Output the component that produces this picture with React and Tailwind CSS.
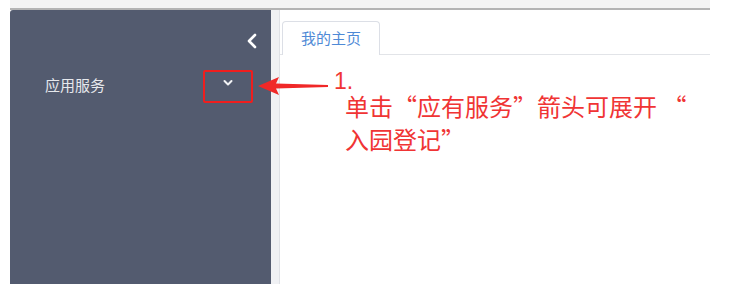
import React from 'react';

const cjk = '"Noto Sans CJK SC", "Noto Sans", sans-serif';

const Sidebar = () => (
  <aside className="w-[261px] h-full bg-[#535b6f] rounded-tl-[3px] pt-[23px]">
    <div className="flex justify-end pr-[13px]">
      <svg width="12" height="16" viewBox="0 0 12 16">
        <path d="M9 2 L3 8 L9 14" fill="none" stroke="#ffffff" strokeWidth="2.6" strokeLinecap="round" strokeLinejoin="round" />
      </svg>
    </div>
    <div className="flex items-center justify-between pl-[35px] pr-[18px] mt-[21px]">
      <span className="text-[15px] leading-[20px] text-[#e6e8ec] mb-[3px]">应用服务</span>
      <div className="w-[50px] h-[33px] border-2 border-[#f01e1e] rounded-[2px] flex justify-center pt-[7px]">
        <svg width="12" height="8" viewBox="0 0 12 8">
          <path d="M2.5 2 L6 5.5 L9.5 2" fill="none" stroke="#f2f3f5" strokeWidth="2" strokeLinecap="round" strokeLinejoin="round" />
        </svg>
      </div>
    </div>
  </aside>
);

const Main = () => (
  <div className="flex-1 h-full bg-white pt-[11px]">
    <div className="flex border-b border-[#e2e4e8] pl-[2px]">
      <div className="w-[98px] h-[34px] -mb-px bg-white border border-b-0 border-[#dcdfe6] rounded-t-[4px] flex items-center justify-center">
        <span className="text-[15px] text-[#4f8ad6]">我的主页</span>
      </div>
    </div>
  </div>
);

export default function App() {
  return (
    <div lang="zh-CN" className="relative w-[756px] h-[303px] bg-white pl-[10px]" style={{ fontFamily: cjk }}>
      <div className="w-[700px] h-[10px] bg-[#f4f4f4] border-b-2 border-[#b4b4b4]" />
      <div className="flex w-[700px] h-[274px]">
        <Sidebar />
        <div className="w-[9px] h-full bg-[#f0f1f4] border-r border-[#dfe1e6]" />
        <Main />
      </div>

      {/* annotation overlay */}
      <svg className="absolute left-[256px] top-[75px]" width="74" height="22" viewBox="0 0 74 22">
        <polygon points="2,11 23,2 20,8.5 72,10 72,12 20,13.5 23,20" fill="#f02828" />
      </svg>
      <div className="absolute left-[334px] top-[73px] text-[#f03434]">
        <div className="text-[23px] leading-[16px] h-[16px]" style={{ fontFamily: '"Liberation Sans", sans-serif' }}>1.</div>
        <div className="ml-[11px] text-[24px] leading-[33px] whitespace-nowrap">
          <div>单击“应有服务”箭头可展开 “</div>
          <div>入园登记”</div>
        </div>
      </div>
    </div>
  );
}
